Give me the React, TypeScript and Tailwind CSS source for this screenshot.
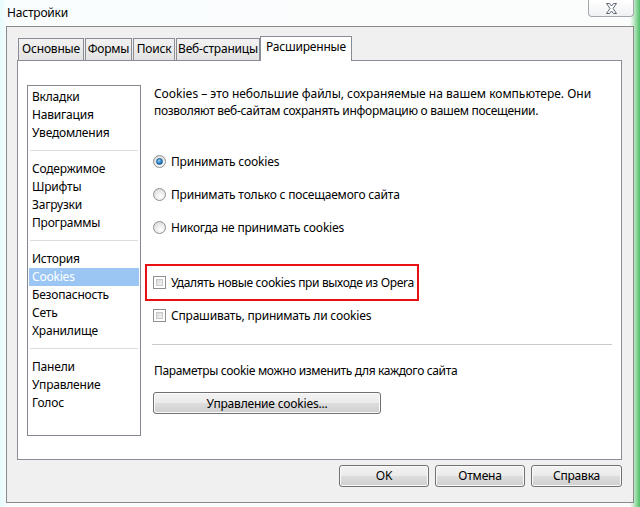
const groups = [
  ['Вкладки', 'Навигация', 'Уведомления'],
  ['Содержимое', 'Шрифты', 'Загрузки', 'Программы'],
  ['История', 'Cookies', 'Безопасность', 'Сеть', 'Хранилище'],
  ['Панели', 'Управление', 'Голос'],
];

const tabs = [
  { label: 'Основные', w: 'w-[66px]' },
  { label: 'Формы', w: 'w-[47px]' },
  { label: 'Поиск', w: 'w-[42px]' },
  { label: 'Веб-страницы', w: 'w-[84px]' },
];

const btn =
  'h-[22px] rounded-[3px] border border-[#707070] bg-[linear-gradient(#f2f2f2_0%,#ebebeb_48%,#dddddd_52%,#cfcfcf_100%)] text-[12px] text-black flex items-center justify-center shadow-[inset_0_0_0_1px_#fbfbfb]';

const Radio = ({ checked }: { checked?: boolean }) => (
  <span className="w-[13px] h-[13px] rounded-full border border-[#8e8f8f] bg-[radial-gradient(circle_at_60%_70%,#ffffff_0%,#e6e6e6_60%,#cfcfcf_100%)] flex items-center justify-center shrink-0">
    {checked && (
      <span className="w-[7px] h-[7px] rounded-full bg-[radial-gradient(circle_at_40%_35%,#9fd6f5_0%,#2a7fc0_55%,#0d4a86_100%)] border border-[#1c5f9a]" />
    )}
  </span>
);

const Check = () => (
  <span className="w-[13px] h-[13px] border border-[#8e8f8f] bg-white p-[2px] shrink-0 flex">
    <span className="flex-1 bg-[linear-gradient(135deg,#d9d9d9,#f4f4f4)] border border-[#c8c8c8]" />
  </span>
);

export default function App() {
  return (
    <div className="w-[640px] h-[507px] flex flex-col bg-[linear-gradient(90deg,#e6fbfb_0px,#fafdfd_8px,#fbfdfd_630px,#bfe8c4_634px,#4fbf6a_640px)] text-black font-['Noto_Sans','Open_Sans',sans-serif] tracking-[-0.2px] overflow-hidden">
      {/* title bar */}
      <div className="h-[26px] flex items-start shrink-0">
        <span className="pl-[7px] pt-[4px] text-[12px] leading-[17px]">Настройки</span>
        <div className="ml-auto mr-[6px] w-[46px] h-[17px] rounded-b-[4px] border border-t-0 border-[#a3a7ad] bg-[linear-gradient(#ffffff,#f0f1f3)] flex items-center justify-center">
          <svg width="13" height="11" viewBox="0 0 13 11">
            <path
              d="M1.5 0.5h3l2 2.5l2-2.5h3l-3.5 5l3.5 5h-3l-2-2.5l-2 2.5h-3l3.5-5z"
              fill="#ffffff"
              stroke="#5d6774"
              strokeWidth="1"
              strokeLinejoin="round"
            />
          </svg>
        </div>
      </div>

      {/* dialog frame */}
      <div className="mx-[6px] h-[477px] border border-[#8a8a8a] bg-[#f0f0f0] flex flex-col pl-[10px] pr-[11px] pt-[9px]">
        {/* tabs */}
        <div className="flex items-end h-[25px] pl-[1px] relative z-10">
          {tabs.map((t) => (
            <div
              key={t.label}
              className={`${t.w} h-[22px] mb-[1px] mr-[1px] border border-b-0 border-[#898c95] bg-[linear-gradient(#f2f2f2,#e3e3e3)] text-center text-[12px] leading-[20px] whitespace-nowrap`}
            >
              {t.label}
            </div>
          ))}
          <div className="w-[92px] h-[25px] border border-b-0 border-[#898c95] bg-white text-center text-[12px] leading-[20px] -ml-[1px] whitespace-nowrap">
            Расширенные
          </div>
        </div>

        {/* tab page */}
        <div className="h-[400px] -mt-[1px] border border-[#898c95] bg-white flex pl-[9px] pt-[24px]">
          <div className="w-[114px] h-[351px] border border-[#828790] bg-white px-[1px] pt-[2px] flex flex-col">
            {groups.map((g, gi) => (
              <div key={gi}>
                {gi > 0 && (
                  <div className="pt-[8px] pb-[9px] px-[1px]">
                    <div className="h-[1px] bg-[#dcdcdc]" />
                  </div>
                )}
                {g.map((item) => (
                  <div
                    key={item}
                    className={`h-[18px] pl-[3px] text-[12px] leading-[18px] ${
                      item === 'Cookies' ? 'bg-[#9bc6f3] text-white' : ''
                    }`}
                  >
                    {item}
                  </div>
                ))}
              </div>
            ))}
          </div>

          <div className="ml-[12px] w-[460px] flex flex-col text-[12px] leading-[17px]">
            <p className="pl-[1px]">
              <span className="tracking-[0px]">Cookies – это небольшие файлы, сохраняемые на вашем компьютере. Они</span>
              <br />
              <span className="tracking-[-0.3px]">позволяют веб-сайтам сохранять информацию о вашем посещении.</span>
            </p>

            <div className="mt-[34px] flex flex-col gap-[16px]">
              <label className="flex items-center gap-[5px] h-[17px]">
                <Radio checked />
                <span>Принимать cookies</span>
              </label>
              <label className="flex items-center gap-[5px] h-[17px]">
                <Radio />
                <span>Принимать только с посещаемого сайта</span>
              </label>
              <label className="flex items-center gap-[5px] h-[17px]">
                <Radio />
                <span>Никогда не принимать cookies</span>
              </label>
            </div>

            <div className="mt-[38px] flex flex-col gap-[16px]">
              <label className="relative flex items-center gap-[5px] h-[17px]">
                <span className="absolute -left-[8px] -top-[10px] w-[274px] h-[37px] border-2 border-[#e81010]" />
                <Check />
                <span className="tracking-[-0.35px]">Удалять новые cookies при выходе из Opera</span>
              </label>
              <label className="flex items-center gap-[5px] h-[17px]">
                <Check />
                <span>Спрашивать, принимать ли cookies</span>
              </label>
            </div>

            <div className="mt-[20px] h-[1px] w-[460px] -ml-[1px] bg-[#c9c9c9]" />

            <p className="mt-[17px] pl-[1px] tracking-[-0.35px]">Параметры cookie можно изменить для каждого сайта</p>

            <button className={`${btn} mt-[13px] w-[228px]`}>Управление cookies...</button>
          </div>
        </div>

        {/* footer buttons */}
        <div className="flex justify-end gap-[6px] mt-[5px]">
          <button className={`${btn} w-[90px]`}>OK</button>
          <button className={`${btn} w-[90px]`}>Отмена</button>
          <button className={`${btn} w-[91px]`}>Справка</button>
        </div>
      </div>
    </div>
  );
}
